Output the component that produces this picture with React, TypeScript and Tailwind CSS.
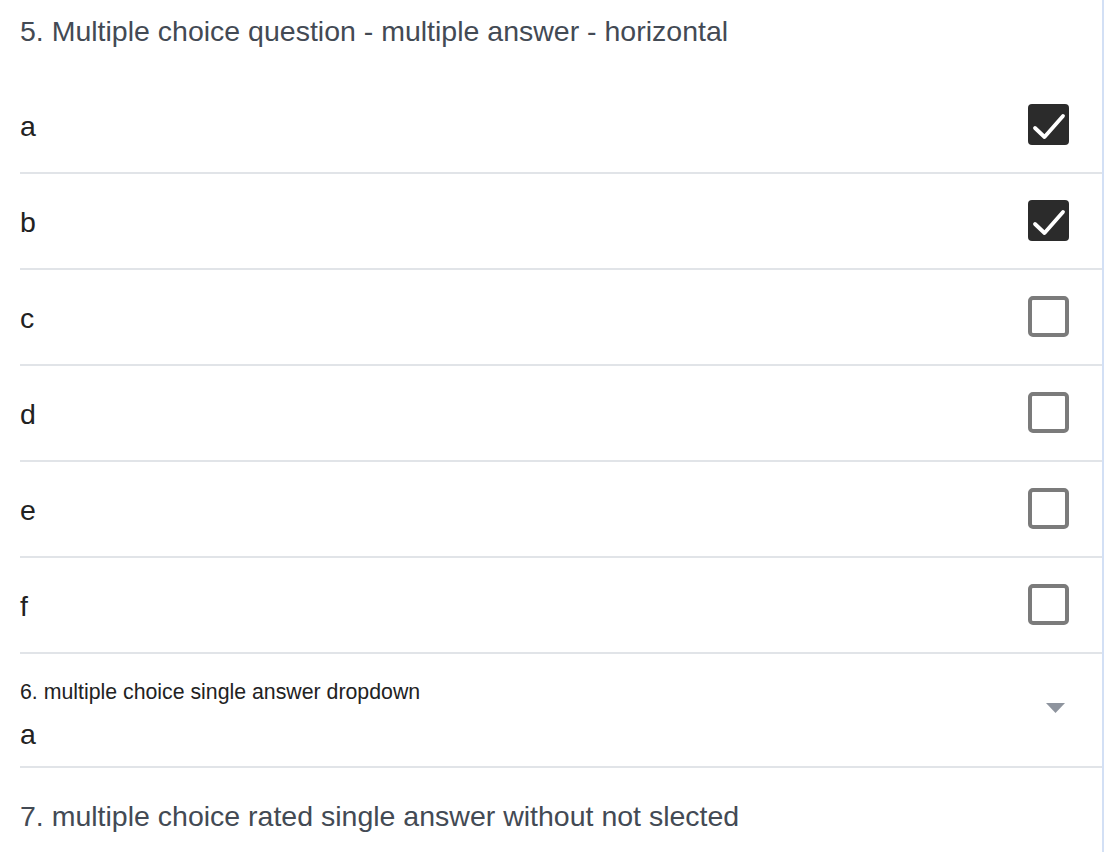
import React from "react";

const options = [
  { label: "a", checked: true },
  { label: "b", checked: true },
  { label: "c", checked: false },
  { label: "d", checked: false },
  { label: "e", checked: false },
  { label: "f", checked: false },
];

function Checked() {
  return (
    <svg width="41" height="41" viewBox="0 0 41 41" className="block">
      <rect x="0" y="0" width="41" height="41" rx="4" fill="#2b2b2b" />
      <polyline
        points="7,24 16.5,33 35,12"
        fill="none"
        stroke="#ffffff"
        strokeWidth="3.8"
        strokeLinecap="round"
        strokeLinejoin="round"
      />
    </svg>
  );
}

function Unchecked() {
  return <div className="w-[41px] h-[41px] rounded-[5px] border-[4px] border-[#7b7b7b] bg-white" />;
}

export default function App() {
  return (
    <div
      className="w-[1104px] h-[852px] bg-white overflow-hidden"
      style={{ fontFamily: '"Liberation Sans", Arial, sans-serif' }}
    >
      <div className="h-full pl-5 border-r-2 border-[#d3e0f5]">
        <div className="h-[78px] pt-[13px] text-[28.5px] leading-[36px] text-[#434a54]">
          5. Multiple choice question - multiple answer - horizontal
        </div>
        {options.map((o) => (
          <div
            key={o.label}
            className="h-[96px] border-b-2 border-[#e1e4e8] flex items-center justify-between pr-[33px]"
          >
            <span className="text-[28.5px] text-[#222] leading-none pt-[2px]">{o.label}</span>
            <div className="-mt-[1px]">{o.checked ? <Checked /> : <Unchecked />}</div>
          </div>
        ))}
        <div className="h-[114px] border-b-2 border-[#e1e4e8] flex items-start justify-between pr-[37px]">
          <div className="flex flex-col pt-[25px]">
            <span className="text-[21.3px] leading-[26px] text-[#222]">
              6. multiple choice single answer dropdown
            </span>
            <span className="text-[28.5px] leading-[34px] mt-[12px] text-[#222]">a</span>
          </div>
          <svg width="19" height="10" viewBox="0 0 19 10" className="block mt-[49px]">
            <polygon points="0,0 19,0 9.5,10" fill="#8e949e" />
          </svg>
        </div>
        <div className="pt-[30px] text-[28.5px] leading-[36px] text-[#434a54]">
          7. multiple choice rated single answer without not slected
        </div>
      </div>
    </div>
  );
}
